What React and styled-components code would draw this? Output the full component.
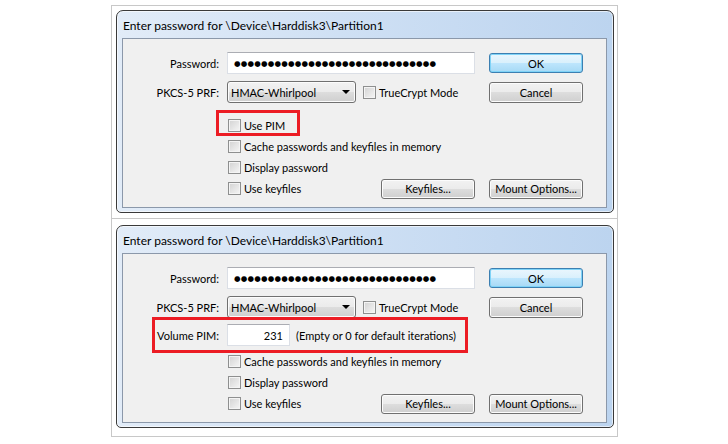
import React from "react";
import styled, { createGlobalStyle } from "styled-components";

const GlobalStyle = createGlobalStyle`
  body {
    margin: 0;
    background: #ffffff;
    font-family: Lato, "Liberation Sans", sans-serif;
  }
`;

const Page = styled.div`
  width: 728px;
  height: 444px;
  padding: 5px 0 0 111px;
  box-sizing: border-box;
`;

const Frame = styled.div`
  width: 507px;
  box-sizing: border-box;
  border: 1px solid #c8c8c8;
`;

const Panel = styled.div`
  padding: ${(p) => (p.$first ? "4px 3px 5px 4px" : "6px 3px 8px 4px")};
  border-bottom: ${(p) => (p.$first ? "1px solid #c8c8c8" : "none")};
`;

const Window = styled.div`
  width: 498px;
  height: 203px;
  box-sizing: border-box;
  border: 1px solid #3a3a3a;
  border-radius: 7px 7px 5px 5px;
  background: linear-gradient(to right, #e2ecf8 0%, #cfe0f4 45%, #bcd4ef 100%);
  box-shadow: inset 0 0 0 1px rgba(255, 255, 255, 0.6);
  display: flex;
  flex-direction: column;
`;

const TitleBar = styled.div`
  height: 27px;
  display: flex;
  align-items: center;
  padding: 1px 0 0 6px;
  box-sizing: border-box;
  font-size: 12px;
  color: #000;
  white-space: nowrap;
`;

const Client = styled.div`
  margin: 0 6px 0 5px;
  height: 170px;
  box-sizing: border-box;
  border: 1px solid #8b98aa;
  background: #f0f0f0;
  padding-top: 13px;
`;

const FormRow = styled.div`
  display: grid;
  grid-template-columns: 104px 262px 94px;
  align-items: center;
  height: ${(p) => p.$h}px;
  margin-top: ${(p) => p.$mt || 0}px;
  position: relative;
`;

const Label = styled.span`
  text-align: right;
  padding-right: 8px;
  font-size: 11px;
  color: #000;
`;

const Field = styled.div`
  display: flex;
  align-items: center;
  width: 248px;
  height: 100%;
  justify-content: ${(p) => (p.$spread ? "space-between" : "flex-start")};
`;

const TextBox = styled.div`
  width: ${(p) => p.$w}px;
  height: 22px;
  box-sizing: border-box;
  border: 1px solid #dbdfe6;
  border-top-color: #abadb3;
  background: #fff;
  display: flex;
  align-items: center;
  justify-content: ${(p) => (p.$right ? "flex-end" : "flex-start")};
  padding: 0 6px;
  font-size: 11px;
  color: #000;
`;

const Dots = styled.span`
  font-family: "DejaVu Sans", sans-serif;
  font-size: 7.5px;
  letter-spacing: 0.2px;
  margin-top: 1px;
  white-space: nowrap;
`;

const Select = styled.div`
  width: 129px;
  height: 22px;
  box-sizing: border-box;
  border: 1px solid #707070;
  border-radius: 3px;
  background: linear-gradient(#f2f2f2 0%, #ebebeb 50%, #dddddd 50%, #cfcfcf 100%);
  box-shadow: inset 0 0 0 1px #fcfcfc;
  display: flex;
  align-items: center;
  justify-content: space-between;
  padding: 0 5px 0 3px;
  font-size: 11px;
`;

const Arrow = styled.span`
  width: 0;
  height: 0;
  border-left: 4px solid transparent;
  border-right: 4px solid transparent;
  border-top: 4px solid #000;
`;

const Button = styled.div`
  width: 94px;
  height: ${(p) => p.$h || 20}px;
  box-sizing: border-box;
  border: 1px solid ${(p) => (p.$default ? "#3c7fb1" : "#707070")};
  border-radius: 3px;
  background: ${(p) =>
    p.$default
      ? "linear-gradient(#eaf6fd 0%, #d9f0fc 50%, #bee6fd 50%, #a7d9f5 100%)"
      : "linear-gradient(#f2f2f2 0%, #ebebeb 50%, #dddddd 50%, #cfcfcf 100%)"};
  box-shadow: inset 0 0 0 1px ${(p) => (p.$default ? "#7fd3f7" : "#fcfcfc")};
  display: flex;
  align-items: center;
  justify-content: center;
  font-size: 11px;
  color: #000;
`;

const Check = styled.label`
  display: flex;
  align-items: center;
  gap: 3px;
  margin-left: ${(p) => p.$ml || 1}px;
  font-size: 11px;
  color: #000;
  white-space: nowrap;
  position: relative;
`;

const Box = styled.span`
  width: 13px;
  height: 13px;
  box-sizing: border-box;
  border: 1px solid #8e8f8f;
  background: linear-gradient(135deg, #d2d2d2 0%, #f6f6f6 100%);
  box-shadow: inset 0 0 0 1px #f4f4f4;
`;

const Hint = styled.span`
  margin-left: 6px;
  font-size: 11px;
  color: #000;
  white-space: nowrap;
`;

const Highlight = styled.span`
  position: absolute;
  left: ${(p) => p.$l}px;
  top: ${(p) => p.$t}px;
  width: ${(p) => p.$w}px;
  height: ${(p) => p.$h}px;
  box-sizing: border-box;
  border: 3px solid #ec1c24;
  pointer-events: none;
`;

const CheckBox = ({ children, ml }) => (
  <Check $ml={ml}>
    <Box />
    {children}
  </Check>
);

const dots = "●".repeat(30);

const Dialog = ({ pim }) => (
  <Window>
    <TitleBar>Enter password for \Device\Harddisk3\Partition1</TitleBar>
    <Client>
      <FormRow $h={22}>
        <Label>Password:</Label>
        <Field>
          <TextBox $w={249}>
            <Dots>{dots}</Dots>
          </TextBox>
        </Field>
        <Button $default $h={20}>OK</Button>
      </FormRow>
      <FormRow $h={22} $mt={7}>
        <Label>PKCS-5 PRF:</Label>
        <Field>
          <Select>
            HMAC-Whirlpool
            <Arrow />
          </Select>
          <CheckBox ml={7}>TrueCrypt Mode</CheckBox>
        </Field>
        <Button $h={21}>Cancel</Button>
      </FormRow>
      {pim ? (
        <FormRow $h={22} $mt={6}>
          <Highlight $l={29} $t={-7} $w={316} $h={36} />
          <Label>Volume PIM:</Label>
          <Field>
            <TextBox $w={63} $right>231</TextBox>
            <Hint>(Empty or 0 for default iterations)</Hint>
          </Field>
        </FormRow>
      ) : (
        <FormRow $h={21} $mt={12}>
          <span />
          <Field>
            <Check $ml={1}>
              <Highlight $l={-12} $t={-9} $w={84} $h={26} />
              <Box />
              Use PIM
            </Check>
          </Field>
        </FormRow>
      )}
      <FormRow $h={21} $mt={pim ? 5 : 0}>
        <span />
        <Field>
          <CheckBox>Cache passwords and keyfiles in memory</CheckBox>
        </Field>
      </FormRow>
      <FormRow $h={21}>
        <span />
        <Field>
          <CheckBox>Display password</CheckBox>
        </Field>
      </FormRow>
      <FormRow $h={21}>
        <span />
        <Field $spread>
          <CheckBox>Use keyfiles</CheckBox>
          <Button $h={20}>Keyfiles...</Button>
        </Field>
        <Button $h={20}>Mount Options...</Button>
      </FormRow>
    </Client>
  </Window>
);

export default function App() {
  return (
    <Page>
      <GlobalStyle />
      <Frame>
        <Panel $first>
          <Dialog />
        </Panel>
        <Panel>
          <Dialog pim />
        </Panel>
      </Frame>
    </Page>
  );
}
